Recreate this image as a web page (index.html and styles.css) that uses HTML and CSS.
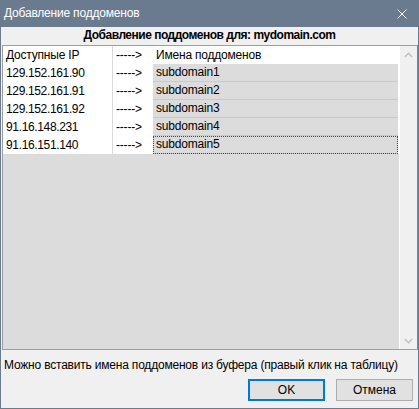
FILE: index.html
```html
<!DOCTYPE html>
<html lang="ru">
<head>
<meta charset="utf-8">
<title>Добавление поддоменов</title>
<link rel="stylesheet" href="styles.css">
</head>
<body>
<div class="window">
  <div class="titlebar">
    <span class="title">Добавление поддоменов</span>
    <svg class="close" width="10" height="10" viewBox="0 0 10 10"><path d="M0.5 0.5 L9.5 9.5 M9.5 0.5 L0.5 9.5" stroke="#ffffff" stroke-width="1" fill="none"/></svg>
  </div>
  <div class="client">
    <div class="caption">Добавление поддоменов для: mydomain.com</div>
    <div class="grid">
      <div class="rows">
        <div class="row head"><div class="c1">Доступные IP</div><div class="c2">-----&gt;</div><div class="c3">Имена поддоменов</div></div>
        <div class="row"><div class="c1">129.152.161.90</div><div class="c2">-----&gt;</div><div class="c3">subdomain1</div></div>
        <div class="row"><div class="c1">129.152.161.91</div><div class="c2">-----&gt;</div><div class="c3">subdomain2</div></div>
        <div class="row"><div class="c1">129.152.161.92</div><div class="c2">-----&gt;</div><div class="c3">subdomain3</div></div>
        <div class="row"><div class="c1">91.16.148.231</div><div class="c2">-----&gt;</div><div class="c3">subdomain4</div></div>
        <div class="row"><div class="c1">91.16.151.140</div><div class="c2">-----&gt;</div><div class="c3 focus">subdomain5</div></div>
      </div>
      <div class="scrollbar">
        <div class="sbtn"><svg width="9" height="6" viewBox="0 0 9 6"><path d="M0.8 5 L4.5 1.3 L8.2 5" stroke="#c2c2c2" stroke-width="1.6" fill="none"/></svg></div>
        <div class="sbtn"><svg width="9" height="6" viewBox="0 0 9 6"><path d="M0.8 1 L4.5 4.7 L8.2 1" stroke="#c2c2c2" stroke-width="1.6" fill="none"/></svg></div>
      </div>
    </div>
    <div class="hint">Можно вставить имена поддоменов из буфера (правый клик на таблицу)</div>
    <div class="buttons">
      <button class="btn ok">OK</button>
      <button class="btn">Отмена</button>
    </div>
  </div>
</div>
</body>
</html>
```

FILE: styles.css
```css
* { box-sizing: border-box; }
html, body { margin: 0; padding: 0; }
body {
  width: 419px;
  height: 409px;
  overflow: hidden;
  font-family: "Liberation Sans", Arial, sans-serif;
  font-size: 12px;
  letter-spacing: -0.2px;
  color: #000;
  background: #6b7b8f;
}
.window {
  width: 419px;
  height: 409px;
  display: flex;
  flex-direction: column;
  background: #6b7b8f;
}
.titlebar {
  height: 27px;
  display: flex;
  align-items: center;
  justify-content: space-between;
  padding: 0 12px 1px 4px;
  color: #fff;
}
.title { font-size: 12px; }
.close { display: block; margin-top: 1px; }
.client {
  flex: 1;
  margin: 0 1px 1px 1px;
  background: #f0f0f0;
  display: flex;
  flex-direction: column;
}
.caption {
  height: 18px;
  line-height: 17px;
  text-align: center;
  font-weight: bold;
  letter-spacing: -0.5px;
}
.grid {
  height: 305px;
  margin-left: 1px;
  border: 1px solid #9a9fa6;
  border-right-color: #7d8794;
  display: flex;
  background: #dcdcdc;
}
.rows {
  width: 396px;
  display: flex;
  flex-direction: column;
}
.row {
  display: flex;
  height: 18px;
  line-height: 18px;
  background: #fff;
  padding-right: 1px;
}
.c1 {
  width: 110px;
  padding-left: 3px;
  border-right: 1px solid #dadada;
  letter-spacing: -0.35px;
}
.c2 {
  width: 40px;
  padding-left: 3px;
}
.c3 {
  flex: 1;
  padding-left: 3px;
  background: #dcdcdc;
  border-bottom: 1px solid #c9c9c9;
  line-height: 17px;
}
.row.head .c1 { letter-spacing: -0.2px; }
.row.head .c3 { background: #fff; border-bottom: none; line-height: 18px; }
.c3.focus { outline: 1px dotted #e00000; outline-offset: -1px; }
.scrollbar {
  flex: 1;
  border-left: 1px solid #fff;
  background: #f0f0f0;
  display: flex;
  flex-direction: column;
  justify-content: space-between;
}
.sbtn {
  height: 17px;
  display: flex;
  align-items: center;
  justify-content: center;
}
.sbtn svg { display: block; }
.hint {
  margin-top: 6px;
  height: 18px;
  line-height: 18px;
  padding-left: 3px;
}
.buttons {
  margin-top: 5px;
  display: flex;
  justify-content: flex-end;
  gap: 11px;
  padding-right: 5px;
}
.btn {
  width: 77px;
  height: 22px;
  margin: 0;
  padding: 0;
  font: inherit;
  letter-spacing: 0;
  background: #e1e1e1;
  border: 1px solid #adadad;
  color: #000;
}
.btn.ok { border: 2px solid #0078d7; }
```
